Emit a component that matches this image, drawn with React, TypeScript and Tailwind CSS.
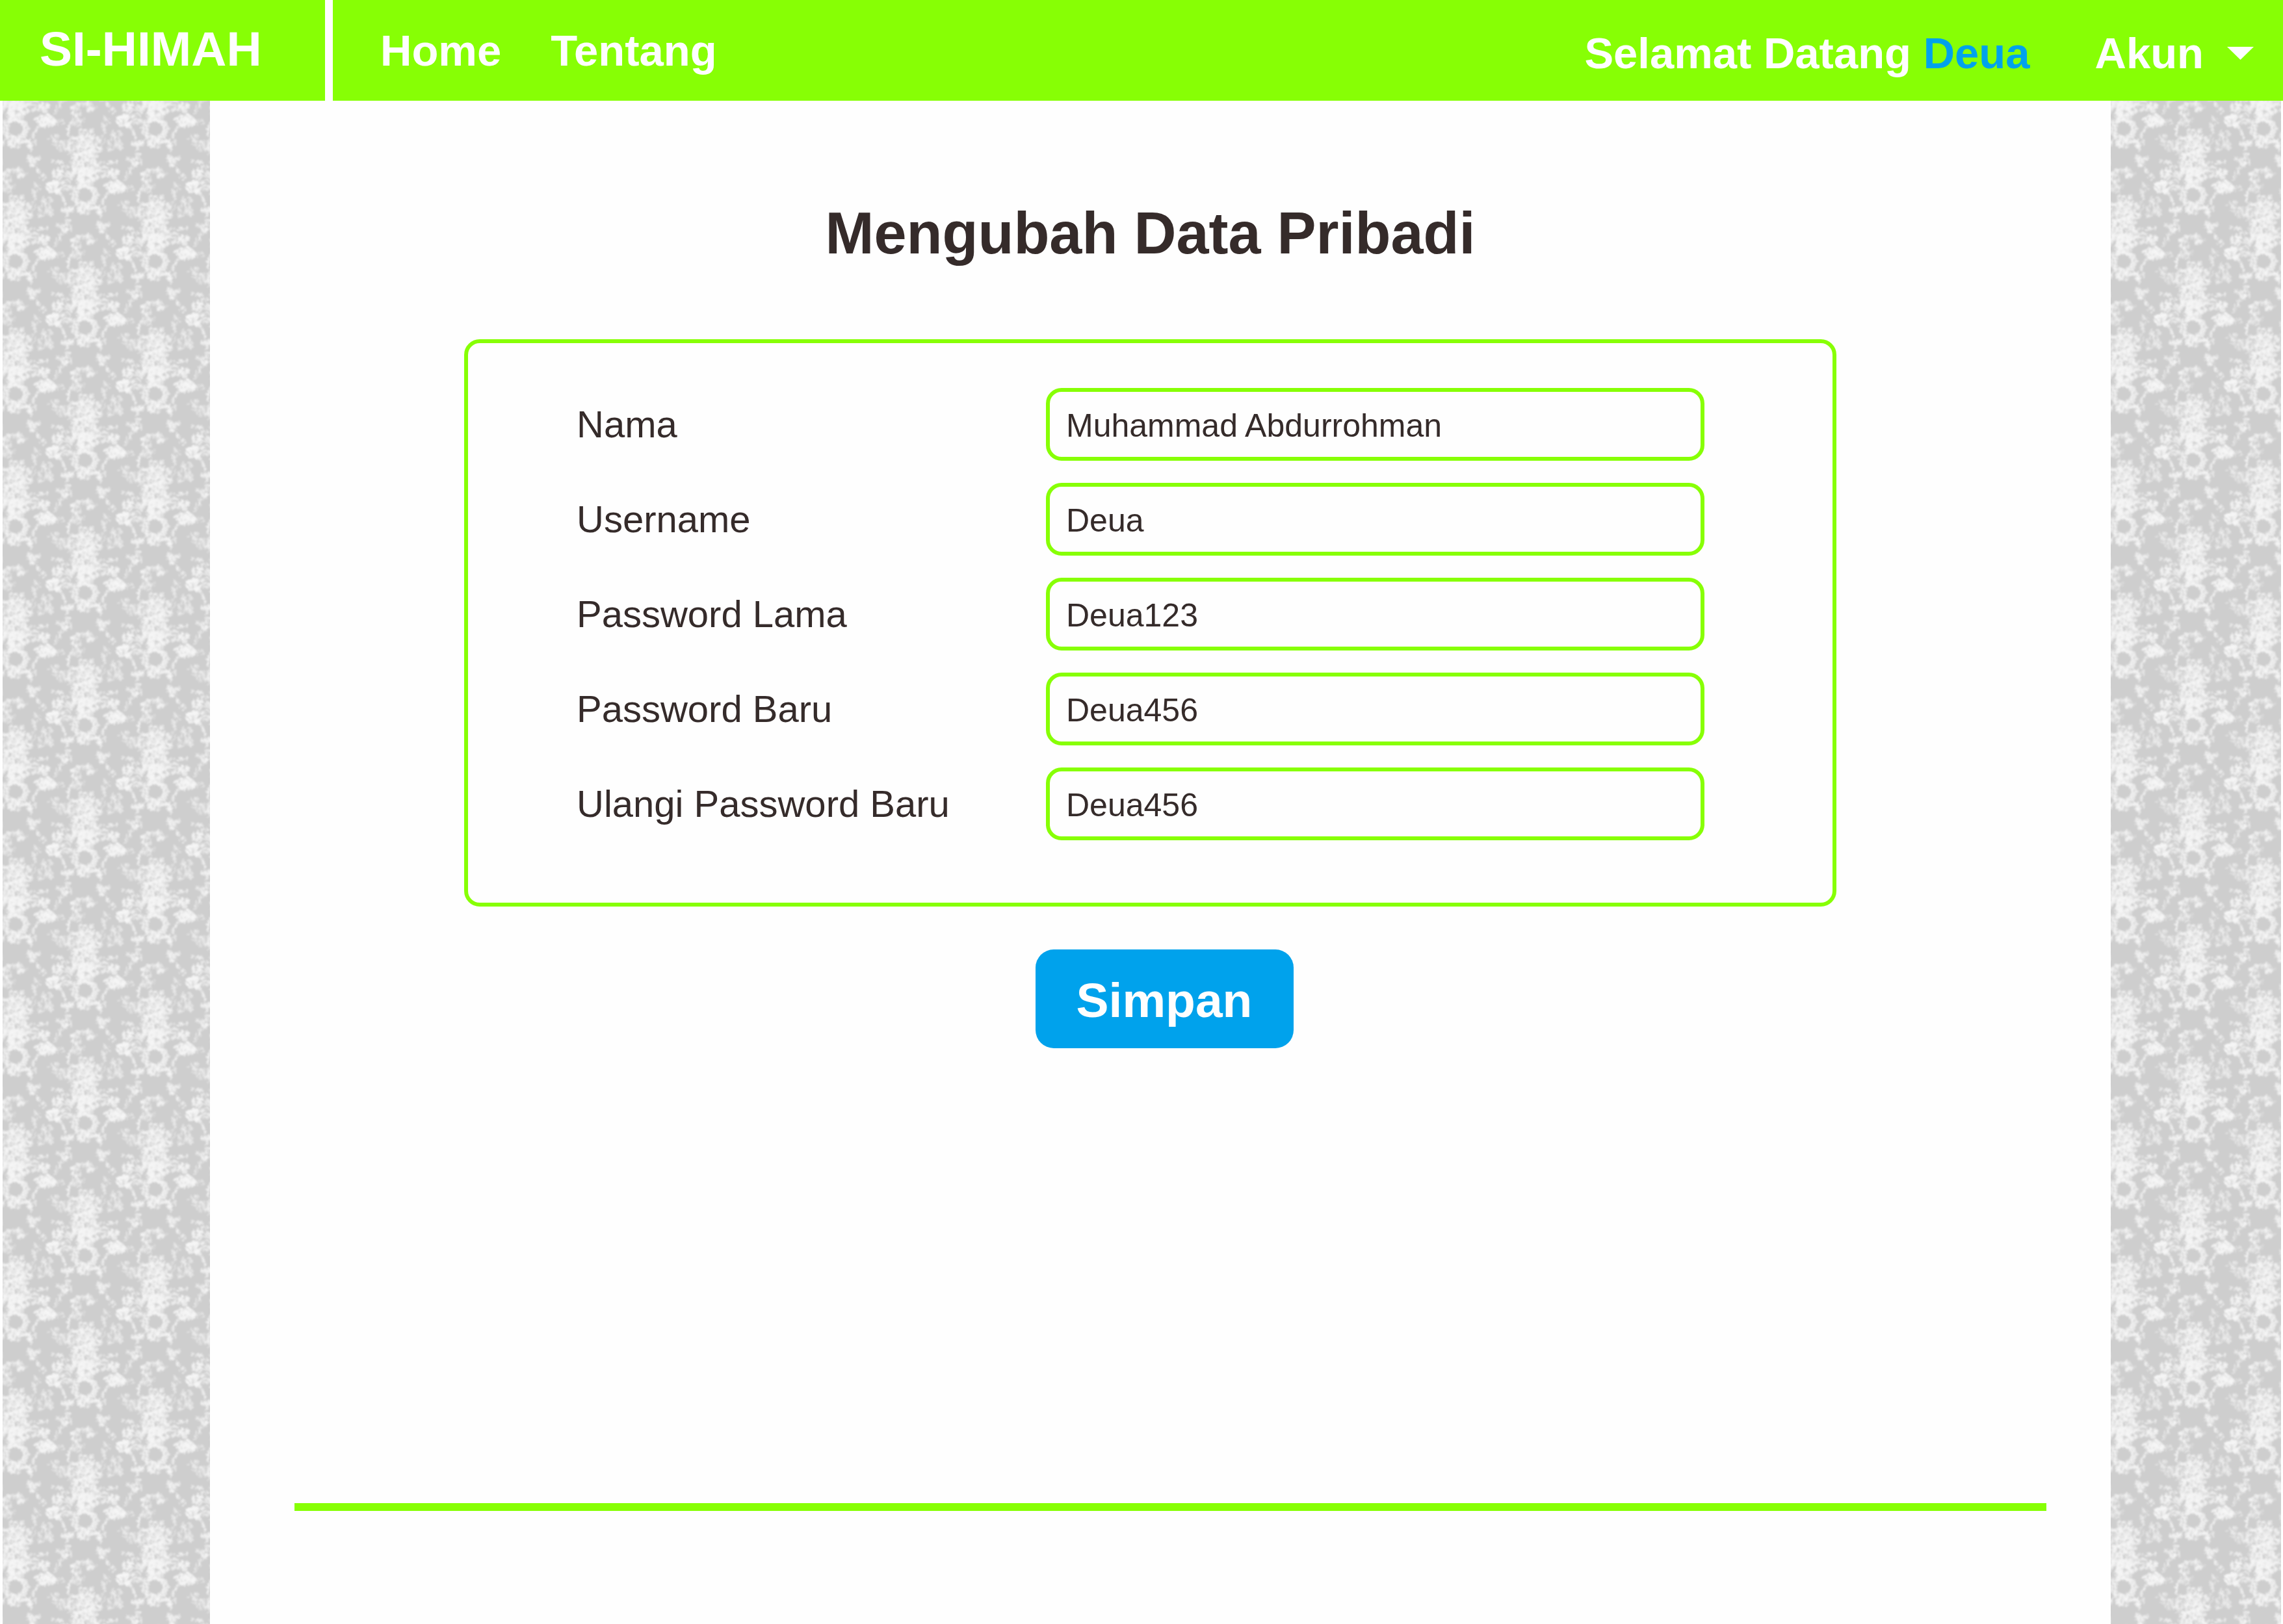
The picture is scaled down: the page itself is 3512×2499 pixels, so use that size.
import React from "react";

type Blob = {
  x: number;
  y: number;
  rx: number;
  ry: number;
  count: number;
  size: number;
  tone: number;
};

// Leafy clusters that make up one bouquet, relative to the centre of its wreath.
const BLOBS: Blob[] = [
  { x: 1, y: -92, rx: 13, ry: 12, count: 40, size: 5, tone: 0.5 },
  { x: 1, y: -80, rx: 30, ry: 12, count: 80, size: 6, tone: 0.5 },
  { x: 0, y: -68, rx: 30, ry: 9, count: 60, size: 6, tone: 0.5 },
  { x: -38, y: -75, rx: 14, ry: 8, count: 26, size: 5, tone: 0.42 },
  { x: 44, y: -76, rx: 14, ry: 10, count: 32, size: 5, tone: 0.42 },
  { x: -48, y: -87, rx: 9, ry: 7, count: 16, size: 5, tone: 0.45 },
  { x: 48, y: -92, rx: 9, ry: 8, count: 18, size: 5, tone: 0.42 },
  { x: 28, y: -94, rx: 4, ry: 16, count: 20, size: 4, tone: 0.38 },
  { x: 1, y: -48, rx: 23, ry: 20, count: 110, size: 6, tone: 0.6 },
  { x: 1, y: -32, rx: 31, ry: 12, count: 100, size: 6, tone: 0.6 },
  { x: 0, y: -19, rx: 17, ry: 7, count: 34, size: 5, tone: 0.5 },
  { x: -42, y: -32, rx: 9, ry: 8, count: 30, size: 5, tone: 0.7 },
  { x: 43, y: -32, rx: 9, ry: 8, count: 30, size: 5, tone: 0.65 },
  { x: -47, y: -13, rx: 13, ry: 9, count: 44, size: 6, tone: 0.8 },
  { x: 46, y: -13, rx: 15, ry: 9, count: 48, size: 6, tone: 0.8 },
  { x: -29, y: -15, rx: 8, ry: 9, count: 20, size: 5, tone: 0.5 },
  { x: 69, y: -10, rx: 8, ry: 5, count: 12, size: 4, tone: 0.4 },
  { x: 1, y: 22, rx: 13, ry: 7, count: 30, size: 5, tone: 0.7 },
  { x: -27, y: 22, rx: 9, ry: 7, count: 24, size: 5, tone: 0.55 },
  { x: 23, y: 22, rx: 9, ry: 7, count: 24, size: 5, tone: 0.55 },
  { x: -29, y: 50, rx: 9, ry: 7, count: 22, size: 5, tone: 0.5 },
  { x: 25, y: 50, rx: 9, ry: 7, count: 22, size: 5, tone: 0.5 },
  { x: -41, y: 46, rx: 6, ry: 3, count: 8, size: 4, tone: 0.5 },
  { x: 37, y: 45, rx: 7, ry: 3, count: 8, size: 4, tone: 0.5 },
  { x: -3, y: 69, rx: 19, ry: 7, count: 38, size: 6, tone: 0.48 },
  { x: -14, y: 79, rx: 10, ry: 5, count: 16, size: 5, tone: 0.45 },
  { x: -9, y: 91, rx: 11, ry: 7, count: 22, size: 5, tone: 0.48 },
  { x: 31, y: 90, rx: 9, ry: 7, count: 16, size: 4, tone: 0.38 },
];

// Garlands of small leaves: the points they run through, and how wide they scatter.
const GARLANDS: { points: [number, number][]; spread: number; tone: number }[] = [
  { points: [[-40, -6], [-33, 6], [-30, 16]], spread: 1, tone: 0.4 },
  { points: [[37, -6], [29, 6], [26, 16]], spread: 1, tone: 0.4 },
  { points: [[-27, 26], [-26, 38], [-29, 50], [-36, 62], [-46, 78]], spread: 4, tone: 0.45 },
  { points: [[23, 26], [23, 38], [25, 50], [33, 64], [47, 80]], spread: 4, tone: 0.45 },
  { points: [[-50, -52], [-32, -50]], spread: 2, tone: 0.45 },
  { points: [[32, -50], [51, -52]], spread: 3, tone: 0.45 },
  { points: [[-22, 92], [-26, 102], [-26, 114]], spread: 1, tone: 0.5 },
  { points: [[-36, -42], [-24, -44]], spread: 2, tone: 0.45 },
  { points: [[36, -42], [24, -44]], spread: 2, tone: 0.45 },
];

function leafShapes() {
  let seed = 7;
  const rnd = () => {
    seed = (seed * 16807) % 2147483647;
    return seed / 2147483647;
  };
  const leaves: {
    x: number;
    y: number;
    a: number;
    b: number;
    turn: number;
    tone: number;
  }[] = [];
  for (const blob of BLOBS) {
    for (let i = 0; i < blob.count; i++) {
      const angle = rnd() * Math.PI * 2;
      const reach = Math.sqrt(rnd());
      leaves.push({
        x: blob.x + Math.cos(angle) * reach * blob.rx,
        y: blob.y + Math.sin(angle) * reach * blob.ry,
        a: blob.size * (0.45 + rnd() * 0.45),
        b: blob.size * (0.22 + rnd() * 0.22),
        turn: Math.round(rnd() * 180),
        tone: blob.tone * (0.4 + rnd() * 0.6),
      });
    }
  }
  for (const { points, spread, tone } of GARLANDS) {
    for (let p = 1; p < points.length; p++) {
      const [x0, y0] = points[p - 1];
      const [x1, y1] = points[p];
      const steps = Math.ceil(Math.hypot(x1 - x0, y1 - y0) / 1.6);
      for (let i = 0; i < steps; i++) {
        const t = i / steps;
        leaves.push({
          x: x0 + (x1 - x0) * t + (rnd() - 0.5) * 2 * spread,
          y: y0 + (y1 - y0) * t + (rnd() - 0.5) * 2 * spread,
          a: 1.8 + rnd() * 1.8,
          b: 1.2 + rnd() * 0.6,
          turn: Math.round(rnd() * 180),
          tone: tone * (0.6 + rnd() * 0.6),
        });
      }
    }
  }
  for (let i = 0; i < 84; i++) {
    const angle = (i / 84) * Math.PI * 2;
    const reach = 12 + rnd() * 9;
    leaves.push({
      x: Math.cos(angle) * reach,
      y: Math.sin(angle) * reach,
      a: 4,
      b: 1.8,
      turn: Math.round(rnd() * 180),
      tone: 0.45,
    });
  }
  return leaves;
}

const LEAVES = leafShapes();
const TILE_W = 215;
const TILE_H = 204;

function FloralStrip({ id }: { id: string }) {
  const spots: [number, number][] = [];
  for (let col = -1; col <= 1; col++) {
    for (let row = -1; row <= 1; row++) {
      spots.push([20 + col * TILE_W, 43 + row * TILE_H]);
      spots.push([127 + col * TILE_W, 145 + row * TILE_H]);
    }
  }
  return (
    <svg className="w-full" aria-hidden="true">
      <defs>
        <filter id={`${id}-soft`} x="-10%" y="-10%" width="120%" height="120%">
          <feGaussianBlur stdDeviation="0.8" />
        </filter>
        <g id={`${id}-bouquet`} filter={`url(#${id}-soft)`}>
          {LEAVES.map((leaf, i) => (
            <ellipse
              key={i}
              rx={leaf.a}
              ry={leaf.b}
              fill="#f6f6f6"
              fillOpacity={leaf.tone}
              transform={`translate(${leaf.x.toFixed(1)} ${leaf.y.toFixed(1)}) rotate(${leaf.turn})`}
            />
          ))}
        </g>
        <pattern
          id={`${id}-tile`}
          width={TILE_W}
          height={TILE_H}
          patternUnits="userSpaceOnUse"
        >
          <rect width={TILE_W} height={TILE_H} fill="#cecece" />
          {spots.map(([x, y]) => (
            <use key={`${x},${y}`} href={`#${id}-bouquet`} x={x} y={y} />
          ))}
        </pattern>
      </defs>
      <rect width="100%" height="100%" fill={`url(#${id}-tile)`} />
    </svg>
  );
}

const FIELDS = [
  { id: "nama", label: "Nama", value: "Muhammad Abdurrohman" },
  { id: "username", label: "Username", value: "Deua" },
  { id: "password-lama", label: "Password Lama", value: "Deua123" },
  { id: "password-baru", label: "Password Baru", value: "Deua456" },
  { id: "ulangi-password", label: "Ulangi Password Baru", value: "Deua456" },
];

function Header() {
  return (
    <header className="flex h-[155px] gap-3 text-[67px] leading-none font-bold text-[#fefefe]">
      <a
        href="#"
        className="flex w-[500px] shrink-0 items-center bg-[#87ff05] pb-1 pl-[61px] text-[75px]"
      >
        SI-HIMAH
      </a>
      <div className="flex flex-1 items-center justify-between bg-[#87ff05] pr-[45px] pl-[73px]">
        <nav className="flex gap-[76px]">
          <a href="#">Home</a>
          <a href="#">Tentang</a>
        </nav>
        <div className="flex items-center gap-[100px] pt-2">
          <p>
            Selamat Datang <span className="text-[#00a2ec]">Deua</span>
          </p>
          <button type="button" className="flex items-center gap-9">
            Akun
            <svg
              viewBox="0 0 41 20"
              className="h-5 w-[41px]"
              fill="currentColor"
              aria-hidden="true"
            >
              <path d="M0 0H41L20.500 20Z" />
            </svg>
          </button>
        </div>
      </div>
    </header>
  );
}

export default function App() {
  return (
    <div
      className={
        "flex min-h-screen flex-col bg-[#fefefe] font-['Liberation_Sans',Arial,sans-serif] text-[#352b2a]"
      }
    >
      <Header />
      <div className="flex flex-1">
        <aside className="ml-1 flex w-[319px] shrink-0">
          <FloralStrip id="left" />
        </aside>
        <main className="flex min-w-0 flex-1 flex-col">
          <form className="flex flex-col" onSubmit={(e) => e.preventDefault()}>
            <div className="flex flex-col pt-[154px] pr-[422px] pl-[391px]">
              <h1 className="text-center text-[90px] leading-[100px] font-bold">
                Mengubah Data Pribadi
              </h1>
              <div className="mt-[113px] flex flex-col gap-[34px] rounded-3xl border-6 border-[#87ff05] pt-[69px] pr-[197px] pb-24 pl-[167px]">
                {FIELDS.map((field) => (
                  <div
                    key={field.id}
                    className="grid grid-cols-[722px_1fr] items-center"
                  >
                    <label htmlFor={field.id} className="text-[58px] leading-none">
                      {field.label}
                    </label>
                    <input
                      id={field.id}
                      type="text"
                      defaultValue={field.value}
                      className="h-28 w-full min-w-0 rounded-3xl border-6 border-[#87ff05] px-[25px] pt-1 text-[50px] outline-none"
                    />
                  </div>
                ))}
              </div>
            </div>
            <div className="mt-[66px] flex justify-center pl-3">
              <button
                type="submit"
                className="h-[152px] w-[397px] rounded-[28px] bg-[#00a2ec] pt-1 text-[75px] leading-none font-bold text-[#fefefe]"
              >
                Simpan
              </button>
            </div>
          </form>
          <hr className="mt-auto mr-[99px] mb-[174px] ml-[130px] h-3 border-0 bg-[#87ff05]" />
        </main>
        <aside className="mr-[3px] flex w-[262px] shrink-0">
          <FloralStrip id="right" />
        </aside>
      </div>
    </div>
  );
}
